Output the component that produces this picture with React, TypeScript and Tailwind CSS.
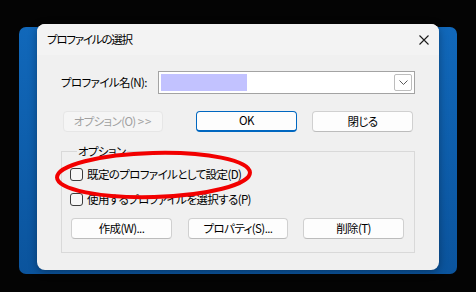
import React from "react";

function Btn({
  label,
  width,
  primary = false,
  disabled = false,
}: {
  label: React.ReactNode;
  width: string;
  primary?: boolean;
  disabled?: boolean;
}) {
  return (
    <div
      className={`${width} h-[21px] flex items-center justify-center rounded-[4px] border leading-none ${
        disabled
          ? "bg-[#f5f5f5] border-[#e6e6e6] text-[#a0a0a0]"
          : primary
          ? "bg-[#fdfdfd] border-[#0067c0] border-b-[2px] text-black"
          : "bg-[#fdfdfd] border-[#d0d0d0] border-b-[#bcbcbc] text-black"
      }`}
    >
      {label}
    </div>
  );
}

function Check({ label }: { label: string }) {
  return (
    <div className="flex items-center h-[17px] gap-[4px]">
      <div className="w-[13px] h-[13px] shrink-0 rounded-[3px] border border-[#3c3c3c] bg-[#f6f6f6]" />
      <span className="leading-none">{label}</span>
    </div>
  );
}

export default function App() {
  return (
    <div className="relative w-[476px] h-[292px] overflow-hidden bg-[#040404] text-[11.5px] tracking-[-0.6px] text-black font-['Noto_Sans_CJK_JP','Noto_Sans',sans-serif] [font-feature-settings:'palt']">
      {/* window behind the dialog */}
      <div className="absolute left-[19px] top-[27px] w-[438px] h-[247px] rounded-[7px] bg-gradient-to-b from-[#1168ba] to-[#0b549d]" />

      {/* dialog */}
      <div className="absolute left-[37px] top-[24px] w-[402px] h-[246px] rounded-[8px] bg-[#f0f0f0] flex flex-col overflow-hidden shadow-[0_2px_8px_rgba(0,0,0,0.35)]">
        {/* title bar */}
        <div className="h-[31px] shrink-0 bg-[#f3f3f3] flex items-center justify-between pl-[10px] pr-[10px]">
          <span className="leading-none tracking-[-1.2px]">プロファイルの選択</span>
          <svg width="10" height="10" viewBox="0 0 10 10">
            <path d="M0.5 0.5 L9.5 9.5 M9.5 0.5 L0.5 9.5" stroke="#1b1b1b" strokeWidth="1.1" fill="none" />
          </svg>
        </div>

        {/* body */}
        <div className="flex flex-col px-[24px] pt-[16px]">
          {/* profile name */}
          <div className="flex items-center">
            <span className="w-[97px] leading-none">プロファイル名(N):</span>
            <div className="w-[257px] h-[23px] border border-[#a3a3a3] bg-white p-[2px] flex">
              <div className="w-[86px] h-full bg-[#c2c2ff]" />
              <div className="ml-auto w-[18px] h-full border border-[#bdbdbd] rounded-[2px] bg-white flex items-center justify-center">
                <svg width="9" height="5" viewBox="0 0 9 5">
                  <path d="M0.5 0.5 L4.5 4.5 L8.5 0.5" stroke="#5a5a5a" strokeWidth="1" fill="none" />
                </svg>
              </div>
            </div>
          </div>

          {/* buttons */}
          <div className="flex items-center mt-[17px] px-[2px]">
            <Btn
              label={
                <span>
                  オプション(O) <span className="tracking-[1px]">&gt;&gt;</span>
                </span>
              }
              width="w-[100px]"
              disabled
            />
            <div className="ml-[33px]">
              <Btn label="OK" width="w-[101px]" primary />
            </div>
            <div className="ml-[15px]">
              <Btn label="閉じる" width="w-[101px]" />
            </div>
          </div>

          {/* options group */}
          <fieldset className="mt-[12px] h-[109px] border border-[#d9d9d9] px-[8px]">
            <legend className="ml-[7px] px-[1px] leading-[14px]">オプション</legend>
            <div className="flex flex-col mt-[8px] gap-[8px]">
              <Check label="既定のプロファイルとして設定(D)" />
              <Check label="使用するプロファイルを選択する(P)" />
            </div>
            <div className="flex mt-[10px] pl-[1px]">
              <Btn label="作成(W)..." width="w-[101px]" />
              <div className="ml-[16px]">
                <Btn label="プロパティ(S)..." width="w-[100px]" />
              </div>
              <div className="ml-[15px]">
                <Btn label="削除(T)" width="w-[101px]" />
              </div>
            </div>
          </fieldset>
        </div>
      </div>

      {/* red annotation */}
      <svg className="absolute left-0 top-0 pointer-events-none" width="476" height="292" viewBox="0 0 476 292">
        <ellipse cx="153.5" cy="175" rx="96.5" ry="22" transform="rotate(-1.5 153.5 175)" fill="none" stroke="#f20000" strokeWidth="4" />
      </svg>
    </div>
  );
}
